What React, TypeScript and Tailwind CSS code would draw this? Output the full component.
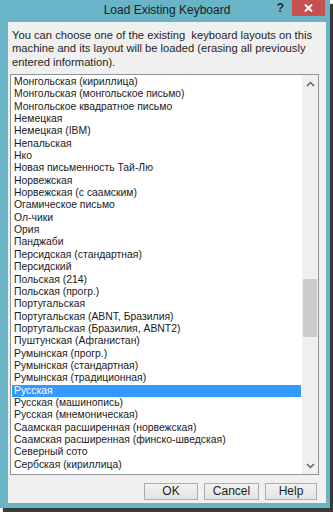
import React from "react";

const layouts = [
  "Монгольская (кириллица)",
  "Монгольская (монгольское письмо)",
  "Монгольское квадратное письмо",
  "Немецкая",
  "Немецкая (IBM)",
  "Непальская",
  "Нко",
  "Новая письменность Тай-Лю",
  "Норвежская",
  "Норвежская (с саамским)",
  "Огамическое письмо",
  "Ол-чики",
  "Ория",
  "Панджаби",
  "Персидская (стандартная)",
  "Персидский",
  "Польская (214)",
  "Польская (прогр.)",
  "Португальская",
  "Португальская (ABNT, Бразилия)",
  "Португальская (Бразилия, ABNT2)",
  "Пуштунская (Афганистан)",
  "Румынская (прогр.)",
  "Румынская (стандартная)",
  "Румынская (традиционная)",
  "Русская",
  "Русская (машинопись)",
  "Русская (мнемоническая)",
  "Саамская расширенная (норвежская)",
  "Саамская расширенная (финско-шведская)",
  "Северный сото",
  "Сербская (кириллица)",
];

const selected = "Русская";

const intro =
  "You can choose one of the existing\u00a0 keyboard layouts on this machine and its layout will be loaded (erasing all previously entered information).";

function Chevron({ up }: { up?: boolean }) {
  return (
    <svg width="9" height="6" viewBox="0 0 9 6">
      <path
        d={up ? "M1 5 L4.5 1.5 L8 5" : "M1 1 L4.5 4.5 L8 1"}
        fill="none"
        stroke="#606060"
        strokeWidth="1.5"
      />
    </svg>
  );
}

function DialogButton({ label, width }: { label: string; width: string }) {
  return (
    <button
      className={`${width} h-[17px] border border-[#adadad] bg-gradient-to-b from-[#f2f2f2] to-[#e3e3e3] text-[12px] leading-[15px] text-[#1e1e1e]`}
    >
      {label}
    </button>
  );
}

export default function App() {
  return (
    <div className="w-[333px] h-[512px] bg-white font-['Liberation_Sans',Arial,sans-serif]">
      <div className="w-[330px] h-[508px] bg-[#69b4c6] flex flex-col shadow-[3px_4px_1px_#3a3a3a]">
        {/* title bar */}
        <div className="h-[22px] grid grid-cols-[1fr_auto_1fr]">
          <div />
          <div className="text-[12px] leading-[20px] text-[#1b1b1b] pl-1">Load Existing Keyboard</div>
          <div className="flex justify-end items-start">
            <span className="text-[12px] leading-[16px] font-bold text-[#2a2a2a] mr-[8px]">?</span>
            <div className="w-[33px] h-[16px] bg-[#c75050] flex items-center justify-center mr-[5px]">
              <svg width="9" height="8" viewBox="0 0 9 8">
                <path d="M1 0.5 L8 7.5 M8 0.5 L1 7.5" stroke="white" strokeWidth="2" />
              </svg>
            </div>
          </div>
        </div>

        {/* client area */}
        <div className="flex-1 ml-[8px] mr-[4px] mb-[5px] bg-[#f0f0f0] flex flex-col pt-[6.5px] pb-[3px]">
          <p className="pl-[4px] pr-[8px] text-[11.2px] leading-[13.5px] text-[#1e1e1e]">{intro}</p>

          <div className="mt-[5px] ml-[2px] w-[309px] h-[401px] border border-[#8f949b] bg-white flex">
            <div className="flex-1 p-[1px] overflow-hidden">
              {layouts.map((name) => (
                <div
                  key={name}
                  className={`h-[12.35px] leading-[12.35px] pl-[2px] text-[10.4px] whitespace-nowrap ${
                    name === selected ? "bg-[#3399ff] text-white" : "text-[#1a1a1a]"
                  }`}
                >
                  {name}
                </div>
              ))}
            </div>
            <div className="w-[16px] bg-[#f0f0f0] flex flex-col">
              <div className="h-[17px] flex items-center justify-center">
                <Chevron up />
              </div>
              <div className="flex-1 flex flex-col px-[1px]">
                <div className="h-[187px]" />
                <div className="h-[58px] bg-[#cdcdcd]" />
              </div>
              <div className="h-[17px] flex items-center justify-center">
                <Chevron />
              </div>
            </div>
          </div>

          <div className="mt-[8px] flex justify-end gap-[6px] pr-[9px]">
            <DialogButton label="OK" width="w-[54px]" />
            <DialogButton label="Cancel" width="w-[55px]" />
            <DialogButton label="Help" width="w-[52px]" />
          </div>
        </div>
      </div>
    </div>
  );
}
